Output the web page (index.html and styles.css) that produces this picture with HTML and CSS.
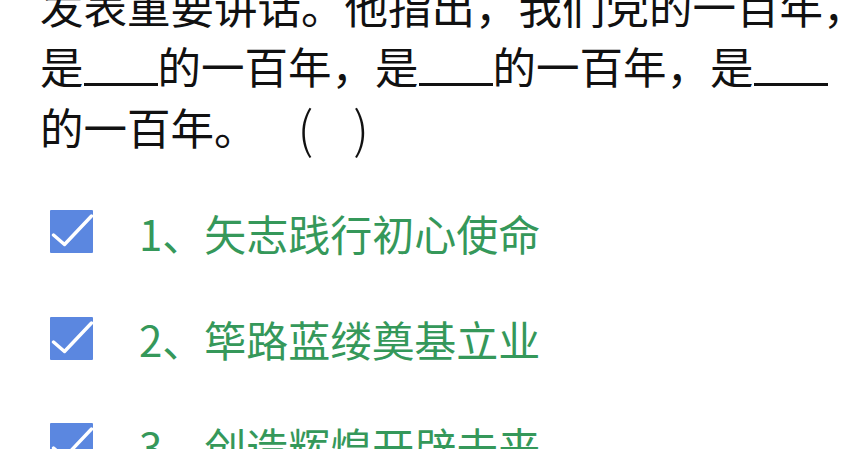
FILE: index.html
```html
<!DOCTYPE html>
<html lang="zh-CN">
<head>
<meta charset="utf-8">
<title>选择题</title>
<link rel="stylesheet" href="styles.css">
</head>
<body>
<div class="page">
  <p class="question">发表重要讲话。他指出，我们党的一百年，<br>是<span class="blank"></span>的一百年，是<span class="blank"></span>的一百年，是<span class="blank"></span><br>的一百年。<span class="paren open">(</span><span class="paren close">)</span></p>
  <ul class="options">
    <li class="option">
      <span class="check"><svg viewBox="0 0 43 43" width="43" height="43"><path d="M3.5 25 L14.5 34.5 L41.5 6" fill="none" stroke="#fff" stroke-width="3.4" stroke-linecap="round" stroke-linejoin="round"/></svg></span>
      <span class="label">1、矢志践行初心使命</span>
    </li>
    <li class="option">
      <span class="check"><svg viewBox="0 0 43 43" width="43" height="43"><path d="M3.5 25 L14.5 34.5 L41.5 6" fill="none" stroke="#fff" stroke-width="3.4" stroke-linecap="round" stroke-linejoin="round"/></svg></span>
      <span class="label">2、筚路蓝缕奠基立业</span>
    </li>
    <li class="option">
      <span class="check"><svg viewBox="0 0 43 43" width="43" height="43"><path d="M3.5 25 L14.5 34.5 L41.5 6" fill="none" stroke="#fff" stroke-width="3.4" stroke-linecap="round" stroke-linejoin="round"/></svg></span>
      <span class="label">3、创造辉煌开辟未来</span>
    </li>
  </ul>
</div>
</body>
</html>
```
FILE: styles.css
```css
html, body {
  margin: 0;
  padding: 0;
  background: #ffffff;
  overflow: hidden;
}

.page {
  width: 842px;
  height: 449px;
  overflow: hidden;
  padding-left: 40px;
  box-sizing: border-box;
  font-family: "Noto Sans CJK SC", "Noto Sans", sans-serif;
}

.question {
  margin: -24.5px 0 0 0;
  font-size: 43.5px;
  line-height: 60px;
  color: #111111;
  white-space: nowrap;
}

.blank {
  display: inline-block;
  width: 74px;
  height: 4px;
  border-bottom: 3px solid #111111;
  vertical-align: -2px;
  box-sizing: border-box;
}

.paren {
  display: inline-block;
  font-size: 50px;
  font-weight: 300;
  vertical-align: -3px;
}

.paren.open {
  margin-left: 40px;
}

.paren.close {
  margin-left: 40px;
}

.options {
  list-style: none;
  margin: 21.75px 0 0 0;
  padding: 0 0 0 10px;
}

.option {
  display: flex;
  align-items: center;
  height: 106.5px;
}

.check {
  display: flex;
  width: 43px;
  height: 43px;
  background: #5b87e0;
  border-radius: 1px;
  flex: none;
}

.label {
  margin-left: 46px;
  font-size: 42px;
  line-height: 60px;
  color: #35985a;
  margin-top: 2px;
}
```
